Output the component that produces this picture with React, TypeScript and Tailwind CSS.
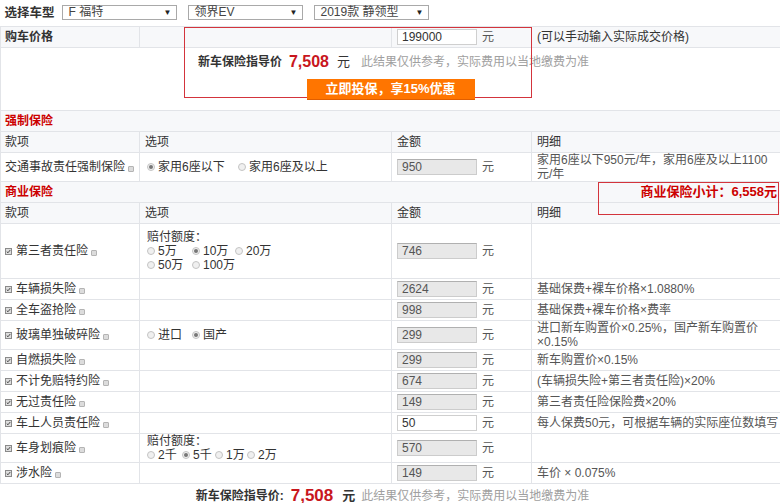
import React from 'react';

const line = 'border border-[#e2e4e8]';
const cell = `${line} px-[5px] align-middle`;
const head = 'bg-[#f7f8fa]';

function Radio({ on }: { on?: boolean }) {
  return (
    <span className="inline-flex w-[8px] h-[8px] rounded-full border border-[#c4c4c4] bg-[#f0f0f0] items-center justify-center shrink-0">
      {on && <span className="w-[4px] h-[4px] rounded-full bg-[#777]" />}
    </span>
  );
}

function Check() {
  return (
    <span className="inline-flex w-[7px] h-[7px] border border-[#8a8a8a] bg-[#dedede] items-center justify-center shrink-0">
      <svg viewBox="0 0 8 8" className="w-[7px] h-[7px]">
        <path d="M1.2 4.2 L3.2 6 L6.8 1.6" fill="none" stroke="#333" strokeWidth="1.4" />
      </svg>
    </span>
  );
}

function Info() {
  return (
    <span className="inline-block w-[6px] h-[6px] ml-[3px] mt-[5px] rounded-[1px] border border-[#b4b4b4] bg-[#dcdcdc] shrink-0" />
  );
}

function Opt({ on, label, w }: { on?: boolean; label: string; w?: string }) {
  return (
    <span className={`inline-flex items-center gap-[2px] ${w ?? ''}`}>
      <Radio on={on} />
      <span className="ml-[1px]">{label}</span>
    </span>
  );
}

function Select({ text }: { text: string }) {
  return (
    <div className="w-[115px] h-[15px] border border-[#a9a9a9] bg-white flex items-center justify-between pl-[6px] pr-[4px] text-[#444]">
      <span className="leading-[13px]">{text}</span>
      <span className="text-[8px] text-[#222]">▼</span>
    </div>
  );
}

function Amount({ value, edit }: { value: string; edit?: boolean }) {
  return (
    <div className="flex items-center">
      <div
        className={`w-[80px] h-[16px] border leading-[14px] px-[4px] ${
          edit ? 'bg-white border-[#cfcfcf] text-[#333]' : 'bg-[#e8e8e8] border-[#cccccc] border-t-[#b0b0b0] text-[#555]'
        }`}
      >
        {value}
      </div>
      <span className="ml-[5px] text-[#555]">元</span>
    </div>
  );
}

function Name({ text, check = true }: { text: string; check?: boolean }) {
  return (
    <div className="flex items-center">
      {check && <span className="mr-[4px] mt-[1px]"><Check /></span>}
      <span>{text}</span>
      <Info />
    </div>
  );
}

type Row = {
  name: string;
  amount: string;
  detail?: React.ReactNode;
  opts?: React.ReactNode;
  h?: string;
  edit?: boolean;
};

const rows: Row[] = [
  {
    name: '第三者责任险',
    amount: '746',
    h: 'h-[55px]',
    opts: (
      <div className="leading-[14px]">
        <div>赔付额度：</div>
        <div className="flex">
          <Opt label="5万" w="w-[45px]" />
          <Opt label="10万" on w="w-[43px]" />
          <Opt label="20万" />
        </div>
        <div className="flex">
          <Opt label="50万" w="w-[45px]" />
          <Opt label="100万" />
        </div>
      </div>
    ),
  },
  { name: '车辆损失险', amount: '2624', detail: '基础保费+裸车价格×1.0880%' },
  { name: '全车盗抢险', amount: '998', detail: '基础保费+裸车价格×费率' },
  {
    name: '玻璃单独破碎险',
    amount: '299',
    h: 'h-[29px]',
    detail: (
      <>
        进口新车购置价×0.25%，国产新车购置价
        <br />
        ×0.15%
      </>
    ),
    opts: (
      <div className="flex">
        <Opt label="进口" w="w-[45px]" />
        <Opt label="国产" on />
      </div>
    ),
  },
  { name: '自燃损失险', amount: '299', detail: '新车购置价×0.15%' },
  { name: '不计免赔特约险', amount: '674', detail: '(车辆损失险+第三者责任险)×20%' },
  { name: '无过责任险', amount: '149', detail: '第三者责任险保险费×20%' },
  { name: '车上人员责任险', amount: '50', edit: true, detail: '每人保费50元，可根据车辆的实际座位数填写' },
  {
    name: '车身划痕险',
    amount: '570',
    h: 'h-[29px]',
    opts: (
      <div className="leading-[14px]">
        <div>赔付额度：</div>
        <div className="flex">
          <Opt label="2千" w="w-[35px]" />
          <Opt label="5千" on w="w-[33px]" />
          <Opt label="1万" w="w-[32px]" />
          <Opt label="2万" />
        </div>
      </div>
    ),
  },
  { name: '涉水险', amount: '149', detail: '车价 × 0.075%' },
];

function ColHead() {
  return (
    <tr className={`h-[21px] ${head}`}>
      <td className={`${cell} pl-[4px]`}>款项</td>
      <td className={cell}>选项</td>
      <td className={cell}>金额</td>
      <td className={cell}>明细</td>
    </tr>
  );
}

export default function App() {
  return (
    <div className="relative w-[780px] h-[503px] overflow-hidden bg-white text-[12px] leading-[14px] text-[#333] font-['Liberation_Sans','Noto_Sans_CJK_SC',sans-serif]">
      <table className="w-[780px] table-fixed border-collapse">
        <colgroup>
          <col className="w-[139px]" />
          <col className="w-[252px]" />
          <col className="w-[140px]" />
          <col className="w-[249px]" />
        </colgroup>
        <tbody>
          <tr className="h-[26px]">
            <td colSpan={4} className="border-b border-[#e2e4e8] px-[4px] align-middle">
              <div className="flex items-center gap-[11px]">
                <span className="font-bold text-[12.5px] w-[46px] whitespace-nowrap">选择车型</span>
                <Select text="F 福特" />
                <Select text="领界EV" />
                <Select text="2019款 静领型" />
              </div>
            </td>
          </tr>
          <tr className={`h-[21px] ${head}`}>
            <td className={`${cell} pl-[4px] font-bold`}>购车价格</td>
            <td className={cell}></td>
            <td className={cell}>
              <Amount value="199000" edit />
            </td>
            <td className={cell}>(可以手动输入实际成交价格)</td>
          </tr>
          <tr className="h-[63px]">
            <td colSpan={4} className={`${line} align-top`}>
              <div className="flex flex-col items-center pt-[4px]">
                <div className="flex items-center h-[20px] pl-[6px]">
                  <span className="font-bold">新车保险指导价</span>
                  <span className="ml-[7px] text-[16px] font-bold text-[#c8161d]">7,508</span>
                  <span className="ml-[8px] text-[13px]">元</span>
                  <span className="ml-[11px] text-[#a0a0a0]">此结果仅供参考，实际费用以当地缴费为准</span>
                </div>
                <button className="relative z-10 mt-[7px] w-[168px] h-[21px] bg-[#ff7500] border-b border-[#e05e00] text-white font-bold text-[13px] leading-[20px]">
                  立即投保，享15%优惠
                </button>
              </div>
            </td>
          </tr>
          <tr className={`h-[21px] ${head}`}>
            <td colSpan={4} className={`${line} px-[4px] font-bold text-[#cc0000]`}>强制保险</td>
          </tr>
          <ColHead />
          <tr className="h-[29px]">
            <td className={`${cell} pl-[4px]`}>
              <Name text="交通事故责任强制保险" check={false} />
            </td>
            <td className={`${cell} pl-[7px]`}>
              <div className="flex">
                <Opt label="家用6座以下" on w="w-[91px]" />
                <Opt label="家用6座及以上" />
              </div>
            </td>
            <td className={cell}>
              <Amount value="950" />
            </td>
            <td className={`${cell} text-[#555]`}>
              家用6座以下950元/年，家用6座及以上1100
              <br />
              元/年
            </td>
          </tr>
          <tr className={`h-[21px] ${head}`}>
            <td colSpan={4} className={`${line} px-[4px]`}>
              <div className="flex justify-between">
                <span className="font-bold text-[#cc0000]">商业保险</span>
                <span className="font-bold text-[13px] text-[#cc0000] -mr-[1px]">商业保险小计：6,558元</span>
              </div>
            </td>
          </tr>
          <ColHead />
          {rows.map((r) => (
            <tr key={r.name} className={r.h ?? 'h-[21px]'}>
              <td className={`${cell} pl-[4px]`}>
                <Name text={r.name} />
              </td>
              <td className={`${cell} pl-[7px]`}>{r.opts}</td>
              <td className={cell}>
                <Amount value={r.amount} edit={r.edit} />
              </td>
              <td className={`${cell} text-[#555] whitespace-nowrap`}>{r.detail}</td>
            </tr>
          ))}
          <tr className="h-[26px]">
            <td colSpan={4} className="align-top">
              <div className="flex items-center justify-center pl-[4px] pt-[3px]">
                <span className="font-bold">新车保险指导价:</span>
                <span className="ml-[7px] text-[17px] leading-[18px] font-bold text-[#c8161d]">7,508</span>
                <span className="ml-[9px] text-[13px] font-bold">元</span>
                <span className="ml-[6px] text-[#a0a0a0]">此结果仅供参考，实际费用以当地缴费为准</span>
              </div>
            </td>
          </tr>
        </tbody>
      </table>
      <div className="absolute left-[184px] top-[27px] w-[348px] h-[71px] border border-[#d3343c]" />
      <div className="absolute left-[598px] top-[182px] w-[181px] h-[33px] border border-[#d3343c]" />
    </div>
  );
}
